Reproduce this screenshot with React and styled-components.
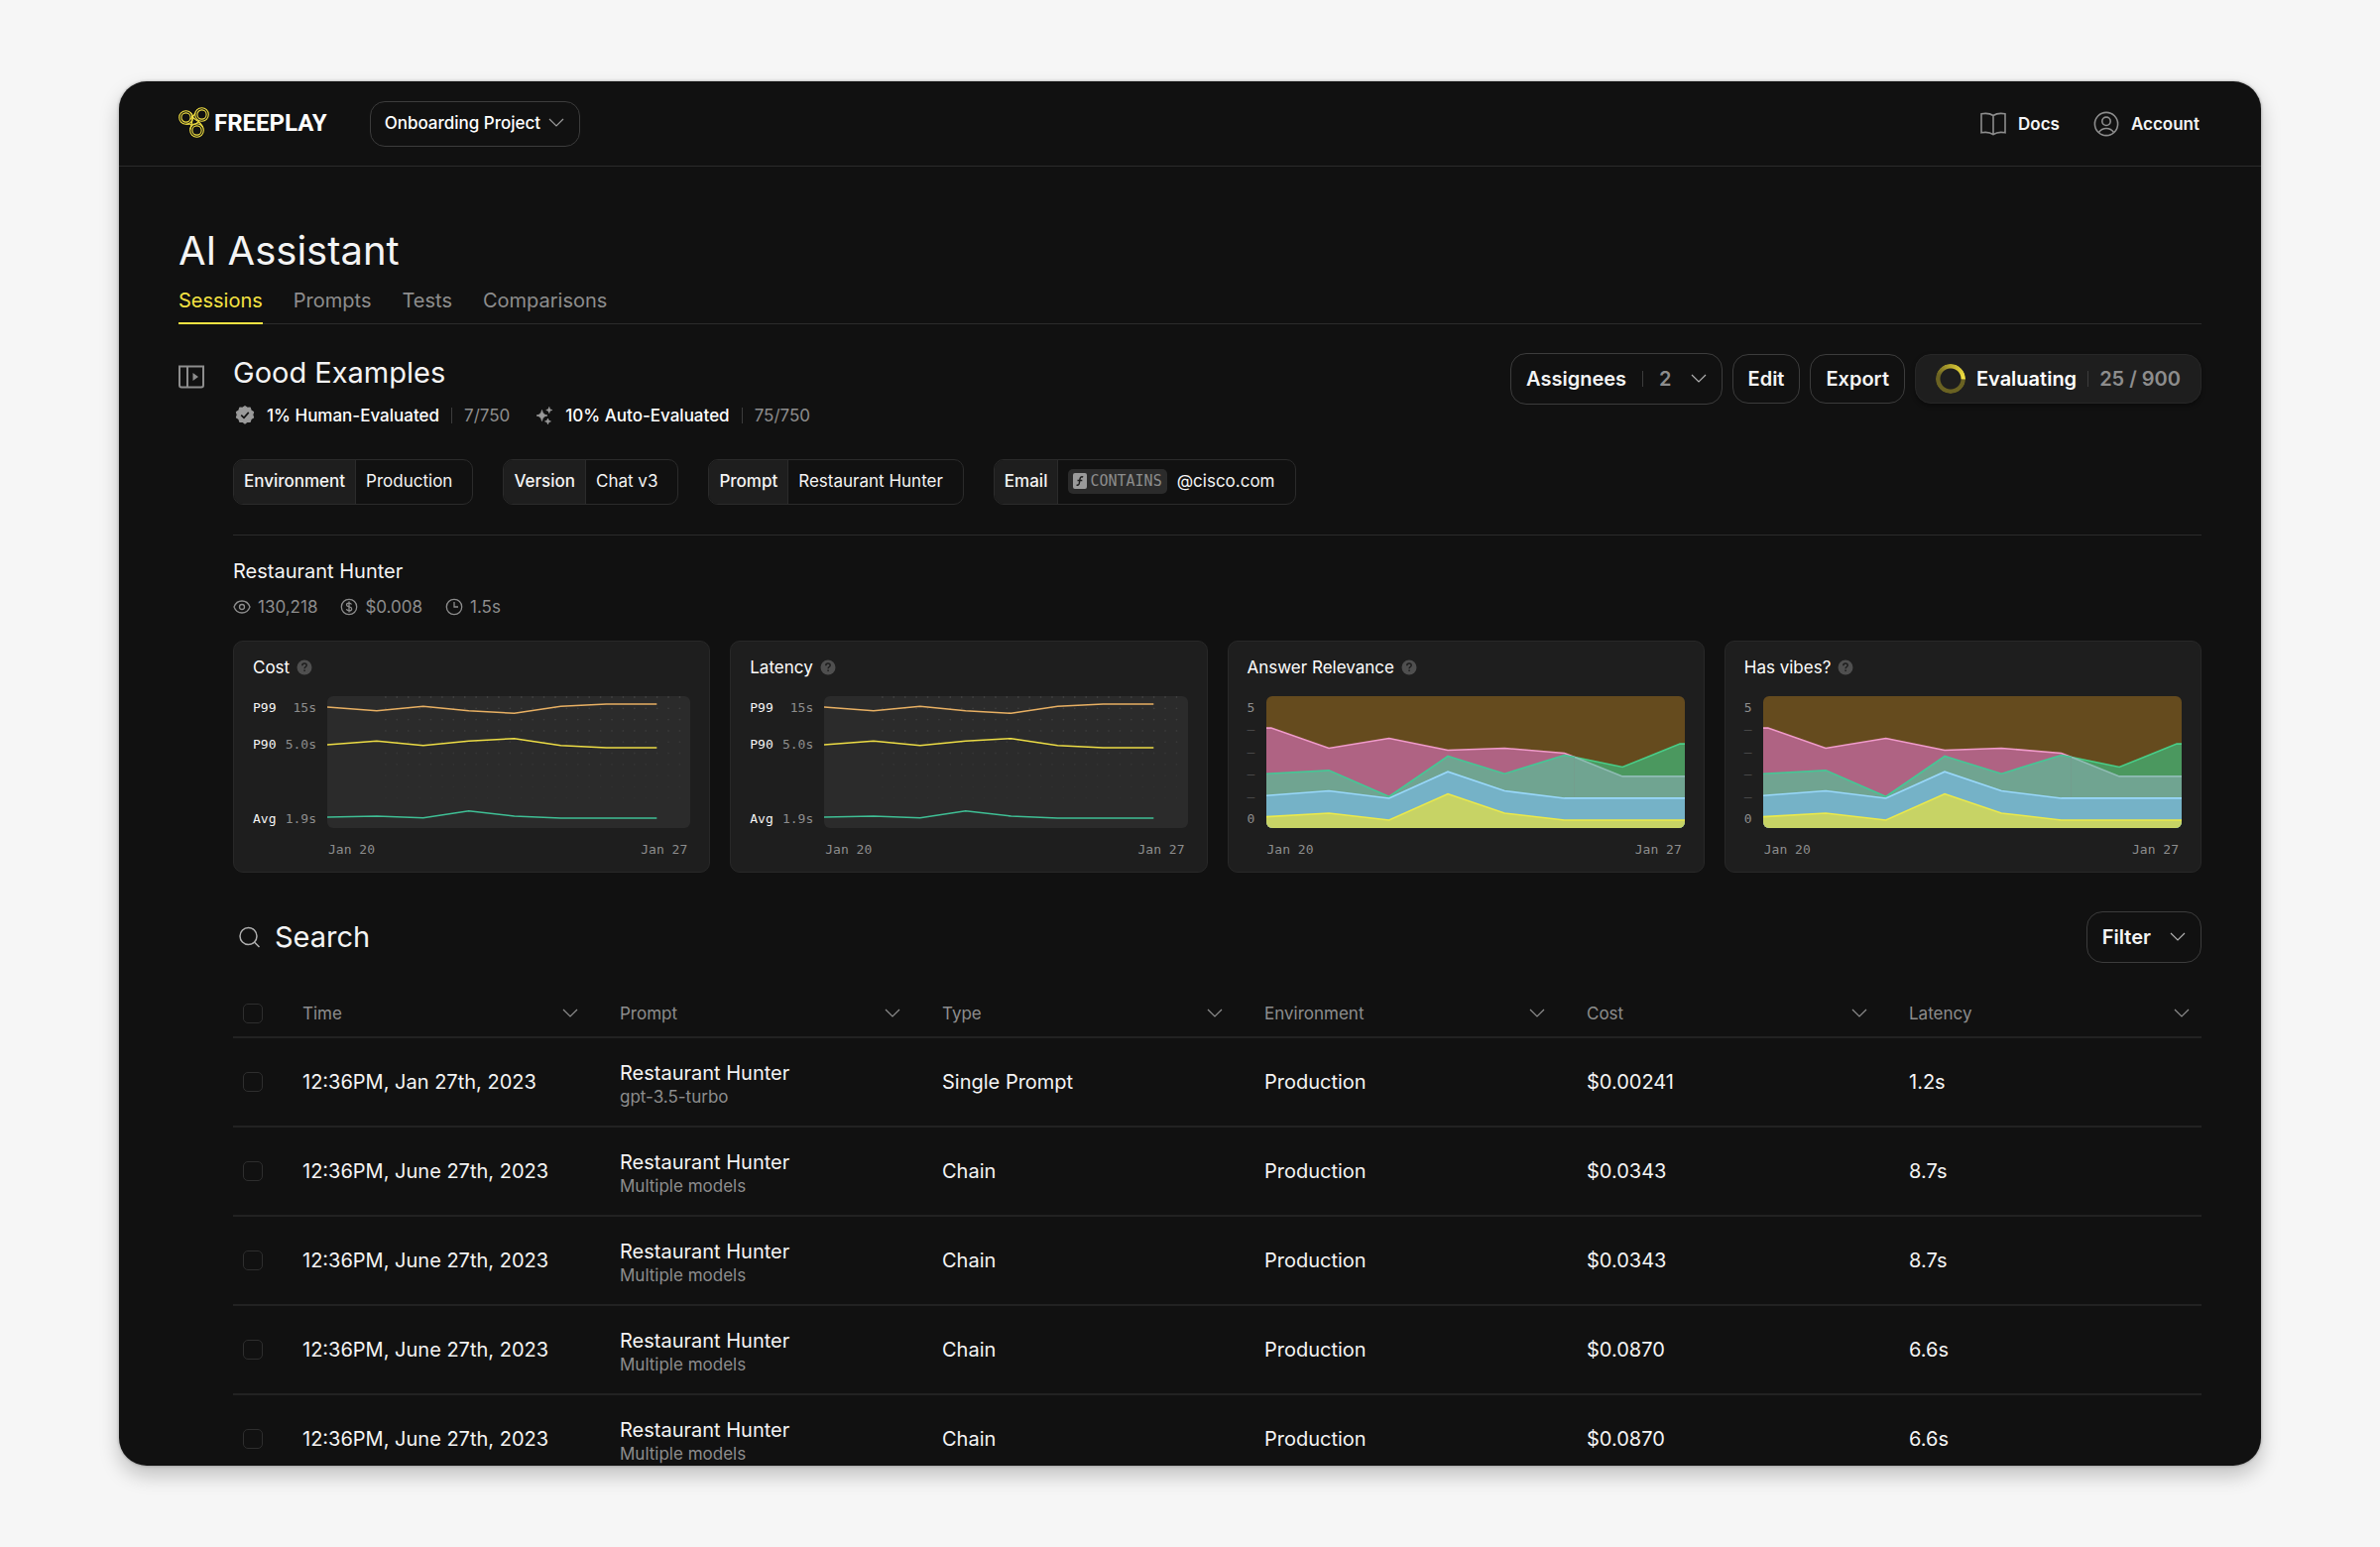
import React from 'react';
import styled, { createGlobalStyle } from 'styled-components';

const GlobalStyle = createGlobalStyle`
  *, *::before, *::after {
    box-sizing: border-box;
  }
  body {
    margin: 0;
    background-color: #f6f6f6;
    color: #f4f4f4;
    font-family: Inter, 'Liberation Sans', sans-serif;
    font-size: 17px;
    line-height: 24px;
  }
  button, input, select {
    font: inherit;
    color: inherit;
  }
  h1, h2, h3, p, ul, dl, dd {
    margin: 0;
    padding: 0;
    font-weight: 400;
  }
  svg {
    display: block;
    flex-shrink: 0;
  }
`;

const mono = "'DejaVu Sans Mono', 'Liberation Mono', monospace";

/* Shell */

const Page = styled.div`
  display: flex;
  height: 100vh;
  padding: 82px 5%;
`;

const AppWindow = styled.div`
  flex: 1;
  min-width: 0;
  overflow: hidden;
  background-color: #111111;
  border-radius: 28px;
  box-shadow: 0 0 3px rgba(0, 0, 0, 0.35), 0 10px 20px rgba(0, 0, 0, 0.22);
`;

const Header = styled.header`
  display: flex;
  align-items: center;
  height: 86px;
  padding: 0 62px 0 60px;
  border-bottom: 1px solid #2b2b2b;
`;

const Logo = styled.a`
  display: flex;
  align-items: center;
  gap: 5px;
  margin-right: 43px;
  padding-bottom: 2px;
  color: #ffffff;
  font-family: Roboto, sans-serif;
  font-size: 24px;
  font-weight: 700;
  text-decoration: none;
`;

const ProjectPicker = styled.label`
  display: flex;
  align-items: center;
  gap: 7px;
  height: 46px;
  padding: 0 15px 2px 14px;
  border: 1px solid #3c3c3c;
  border-radius: 15px;
  color: #9a9a9a;
  select {
    appearance: none;
    padding: 0;
    border: 0;
    background: none;
    color: #ffffff;
    font-weight: 500;
  }
`;

const HeaderNav = styled.nav`
  display: flex;
  gap: 34px;
  margin-left: auto;
`;

const HeaderLink = styled.a`
  display: flex;
  align-items: center;
  gap: 12px;
  color: #f4f4f4;
  font-weight: 600;
  text-decoration: none;
  svg {
    color: #8d8d8d;
  }
`;

const Main = styled.main`
  padding: 60px 60px 0;
`;

const PageTitle = styled.h1`
  font-size: 40px;
  line-height: 50px;
`;

const Tabs = styled.nav`
  display: flex;
  gap: 31px;
  height: 49px;
  border-bottom: 1px solid #2b2b2b;
`;

const Tab = styled.a`
  height: 49px;
  padding-top: 13px;
  font-size: 20px;
  color: ${props => (props.$active ? '#f5e342' : '#8d8d8d')};
  border-bottom: 2px solid ${props => (props.$active ? '#f5e342' : 'transparent')};
  text-decoration: none;
`;

const Body = styled.div`
  display: flex;
  align-items: flex-start;
  gap: 29px;
  padding-top: 29px;
`;

const PanelToggle = styled.button`
  margin-top: 12px;
  padding: 0;
  border: 0;
  background: none;
  color: #8d8d8d;
`;

const Content = styled.div`
  flex: 1;
  min-width: 0;
`;

/* Dataset heading */

const ContentHeader = styled.div`
  display: flex;
  justify-content: space-between;
  align-items: flex-start;
`;

const SectionTitle = styled.h2`
  font-size: 29px;
  line-height: 40px;
`;

const Progress = styled.ul`
  display: flex;
  gap: 26px;
  margin-top: 11px;
  padding-left: 2px;
  list-style: none;
`;

const ProgressItem = styled.li`
  display: flex;
  align-items: center;
  gap: 12px;
  color: #8d8d8d;
  strong {
    color: #ffffff;
    font-weight: 500;
  }
`;

const Separator = styled.span`
  width: 1px;
  height: 16px;
  background-color: #3c3c3c;
`;

const Actions = styled.div`
  display: flex;
  align-items: center;
  gap: 10px;
`;

const Button = styled.button`
  display: flex;
  align-items: center;
  gap: 16px;
  height: ${props => (props.$menu ? '52px' : '50px')};
  padding: 0 15px;
  border: 1px solid #3c3c3c;
  border-radius: 16px;
  background: none;
  font-size: 20px;
  font-weight: 600;
  color: #f4f4f4;
  svg {
    color: #b0b0b0;
    margin-left: 3px;
  }
`;

const Count = styled.span`
  color: #8d8d8d;
`;

const Evaluating = styled.div`
  display: flex;
  align-items: center;
  gap: 11px;
  height: 50px;
  padding: 0 20px;
  border: 1px solid #272727;
  border-radius: 16px;
  background-color: #1e1e1e;
  font-size: 20px;
  font-weight: 600;
  color: #ffffff;
  box-shadow: 0 2px 4px rgba(0, 0, 0, 0.4);
`;

const Ring = styled.span`
  width: 30px;
  height: 30px;
  border-radius: 50%;
  background: conic-gradient(#b8a92e, #f5e342 25%, #6a6222 26%, #6a6222 80%, #b8a92e);
  mask: radial-gradient(circle, transparent 10px, #000000 11px);
`;

/* Filters */

const Filters = styled.dl`
  display: flex;
  gap: 30px;
  padding: 32px 0 30px;
  border-bottom: 1px solid #2b2b2b;
`;

const FilterChip = styled.div`
  display: flex;
  height: 46px;
  border: 1px solid #2b2b2b;
  border-radius: 10px;
  overflow: hidden;
  dt, dd {
    display: flex;
    align-items: center;
    padding: 0 10px 2px;
  }
  dt {
    background-color: #1e1e1e;
    border-right: 1px solid #2b2b2b;
    font-weight: 500;
  }
  dd {
    gap: 10px;
    padding-right: 20px;
  }
`;

const Operator = styled.span`
  display: flex;
  align-items: center;
  gap: 3px;
  height: 25px;
  padding: 0 5px;
  border-radius: 5px;
  background-color: #2b2b2b;
  color: #8d8d8d;
  font-family: ${mono};
  font-size: 15px;
`;

/* Prompt summary and charts */

const Summary = styled.section`
  padding: 23px 0 39px;
`;

const SummaryTitle = styled.h3`
  font-size: 20px;
  line-height: 26px;
`;

const Metrics = styled.ul`
  display: flex;
  gap: 23px;
  margin: 11px 0 22px;
  list-style: none;
  color: #8d8d8d;
`;

const Metric = styled.li`
  display: flex;
  align-items: center;
  gap: 7px;
`;

const Cards = styled.div`
  display: grid;
  grid-template-columns: repeat(4, minmax(0, 1fr));
  gap: 20px;
`;

const Card = styled.article`
  padding: 14px 19px 13px;
  border: 1px solid #282828;
  border-radius: 10px;
  background-color: #1e1e1e;
`;

const CardTitle = styled.h3`
  display: flex;
  align-items: center;
  gap: 7px;
  margin-bottom: 17px;
  font-size: 17px;
  color: #ffffff;
`;

const ChartGrid = styled.div`
  display: grid;
  grid-template-columns: ${props => props.$axis} minmax(0, 1fr);
  row-gap: 13px;
  font-family: ${mono};
  font-size: 13px;
  line-height: 18px;
  color: #8d8d8d;
`;

const Axis = styled.div`
  display: flex;
  flex-direction: column;
  justify-content: space-between;
  padding: 3px 11px 0 0;
`;

const AxisRow = styled.div`
  display: flex;
  justify-content: space-between;
  min-height: 18px;
  color: ${props => (props.$dim ? '#4a4a4a' : '#8d8d8d')};
  b {
    color: #f4f4f4;
    font-weight: 400;
  }
`;

const ChartSvg = styled.svg`
  width: 100%;
  height: 133px;
  border-radius: 6px;
  background-color: ${props => props.$background};
  polyline {
    fill: none;
    stroke-width: 1.6px;
    vector-effect: non-scaling-stroke;
  }
`;

const Dates = styled.div`
  display: flex;
  grid-column: 2;
  justify-content: space-between;
  padding: 0 3px 0 1px;
`;

/* Search and table */

const SearchBar = styled.div`
  display: flex;
  align-items: center;
  justify-content: space-between;
`;

const SearchField = styled.label`
  display: flex;
  flex: 1;
  align-items: center;
  gap: 15px;
  padding-left: 6px;
  color: #b0b0b0;
  input {
    flex: 1;
    padding: 0;
    border: 0;
    background: none;
    color: #f4f4f4;
    font-size: 29px;
    line-height: 40px;
  }
  input::placeholder {
    color: #f4f4f4;
    opacity: 1;
  }
`;

const Table = styled.table`
  width: 100%;
  margin-top: 28px;
  border-collapse: collapse;
  table-layout: fixed;
  th, td {
    padding: 0;
    text-align: left;
    border-bottom: 2px solid #222222;
  }
  th {
    height: 47px;
    padding-right: 42px;
    color: #8d8d8d;
    font-weight: 400;
  }
  th:first-child {
    padding-right: 0;
  }
  th:last-child {
    padding-right: 12px;
  }
  td {
    height: 90px;
    font-size: 20px;
  }
`;

const SortButton = styled.button`
  display: flex;
  align-items: center;
  justify-content: space-between;
  width: 100%;
  padding: 0;
  border: 0;
  background: none;
`;

const Checkbox = styled.input.attrs({ type: 'checkbox' })`
  display: block;
  appearance: none;
  width: 20px;
  height: 20px;
  margin: 0 0 0 10px;
  border: 1px solid #2e2e2e;
  border-radius: 5px;
`;

const PromptName = styled.p`
  padding-top: 5px;
`;

const Model = styled.p`
  color: #8d8d8d;
  font-size: 17px;
`;

/* Icons */

const LogoMark = () => (
  <svg width="31" height="31" viewBox="0 0 31 31" fill="none" stroke="#f5e342" strokeWidth="1.1">
    <circle cx="7.500" cy="10.500" r="6.800" />
    <circle cx="7.500" cy="10.500" r="4.600" />
    <circle cx="23.500" cy="7.500" r="6.800" />
    <circle cx="23.500" cy="7.500" r="4.600" />
    <circle cx="18.500" cy="23.500" r="6.800" />
    <circle cx="18.500" cy="23.500" r="4.600" />
    <path d="M7.500 17.300h8.500c2 0 3-1.200 4.500-3.600M12.300 5.800c2.500 2.500 2.200 4.500 1.800 7.200l-2.300 9.500M16.800 6c-1.500 3.500-3.300 4.200-5 6.500M13 9l4 3.500c3 1.500 6 4.500 7.800 8" />
  </svg>
);

const ChevronIcon = () => (
  <svg width="16" height="10" viewBox="0 0 16 10" fill="none" stroke="currentColor" strokeWidth="1.2">
    <path d="M1 1l7 7 7-7" />
  </svg>
);

const BookIcon = () => (
  <svg width="26" height="24" viewBox="0 0 26 24" fill="none" stroke="currentColor" strokeWidth="1.6">
    <path d="M13 3.500C10 1.500 5 1 1 1.800v19c4-.8 9-.3 12 1.900 3-2.200 8-2.700 12-1.900v-19C21 1 16 1.500 13 3.500zM13 3.500v19" />
  </svg>
);

const AccountIcon = () => (
  <svg width="26" height="26" viewBox="0 0 26 26" fill="none" stroke="currentColor" strokeWidth="1.6">
    <circle cx="13" cy="13" r="11.600" />
    <circle cx="13" cy="10.300" r="4.200" />
    <path d="M5.500 21.500c2-3 4.500-4 7.500-4s5.500 1 7.500 4" />
  </svg>
);

const PanelIcon = () => (
  <svg width="26" height="24" viewBox="0 0 26 24" fill="none" stroke="currentColor" strokeWidth="2">
    <path d="M1 1.500h24v19a2 2 0 0 1-2 2H3a2 2 0 0 1-2-2zM9 1.500v21" />
    <path d="M14.500 8v8l5.500-4z" fill="currentColor" stroke="none" />
  </svg>
);

const BadgeIcon = () => (
  <svg width="20" height="20" viewBox="0 0 24 24">
    <path
      fill="#9a9a9a"
      d="M12 .8l2.800 2 3.400-.2 1.100 3.300 2.900 1.900-1 3.300 1 3.300-2.900 1.900-1.100 3.300-3.400-.1-2.800 2.100-2.800-2.100-3.400.1-1.100-3.300-2.900-1.900 1-3.300-1-3.300 2.900-1.900 1.100-3.300 3.400.2z"
      stroke="#9a9a9a"
      strokeWidth="1.500"
      strokeLinejoin="round"
    />
    <path d="M7.500 11.500l3.300 3.300 5.700-6.600" fill="none" stroke="#111111" strokeWidth="2" />
  </svg>
);

const SparklesIcon = () => (
  <svg width="18" height="18" viewBox="0 0 18 18" fill="#9a9a9a" stroke="#9a9a9a" strokeWidth="0.8" strokeLinejoin="round">
    <path d="M6.500 3.500c.8 3.500 2 4.700 5.500 5.500-3.500.8-4.700 2-5.500 5.500C5.700 11 4.500 9.800 1 9c3.500-.8 4.700-2 5.500-5.500z" />
    <path d="M13.800.5c.4 2 1 2.600 3 3-2 .4-2.600 1-3 3-.4-2-1-2.600-3-3 2-.4 2.600-1 3-3zM12.500 12c.4 1.900 1 2.500 2.900 2.900-1.900.4-2.500 1-2.900 2.900-.4-1.900-1-2.500-2.900-2.900 1.900-.4 2.500-1 2.900-2.900z" />
  </svg>
);

const FunctionIcon = () => (
  <svg width="14" height="16" viewBox="0 0 14 16">
    <rect width="14" height="16" rx="2" fill="#9a9a9a" />
    <path d="M10.200 4c-2-.8-2.900.2-3.200 2l-.6 4c-.3 1.900-1.200 2.600-2.800 2M4.500 7.500h4.800" fill="none" stroke="#1e1e1e" strokeWidth="1.500" />
  </svg>
);

const EyeIcon = () => (
  <svg width="18" height="16" viewBox="0 0 18 16" fill="none" stroke="currentColor" strokeWidth="1.300">
    <path d="M1 8c1.500-4 4.500-6 8-6s6.500 2 8 6c-1.500 4-4.500 6-8 6s-6.500-2-8-6z" />
    <circle cx="9" cy="8" r="2.500" />
  </svg>
);

const DollarIcon = () => (
  <svg width="18" height="18" viewBox="0 0 18 18" fill="none" stroke="currentColor" strokeWidth="1.300">
    <circle cx="9" cy="9" r="7.700" />
    <path d="M11.500 6.500C11 5.600 10.200 5.200 9 5.200c-1.500 0-2.500.7-2.500 1.800 0 2.700 5.200 1.200 5.200 3.900 0 1.200-1.100 1.900-2.700 1.900-1.300 0-2.200-.5-2.700-1.500M9 3.500v11" />
  </svg>
);

const ClockIcon = () => (
  <svg width="18" height="18" viewBox="0 0 18 18" fill="none" stroke="currentColor" strokeWidth="1.300">
    <circle cx="9" cy="9" r="7.700" />
    <path d="M9 4v5h4" />
  </svg>
);

const HelpIcon = () => (
  <svg width="16" height="16" viewBox="0 0 16 16">
    <circle cx="8" cy="8" r="7.500" fill="#4f4f4f" />
    <path d="M5.800 6.200c0-1.300.9-2.100 2.200-2.100s2.200.8 2.200 1.900c0 1.500-2.100 1.500-2.100 3.200M8.100 10.500v1.600" fill="none" stroke="#1e1e1e" strokeWidth="1.500" />
  </svg>
);

const SearchIcon = () => (
  <svg width="21" height="22" viewBox="0 0 21 22" fill="none" stroke="currentColor" strokeWidth="1.500">
    <circle cx="9.500" cy="10" r="8.500" />
    <path d="M15.500 16l5 5" />
  </svg>
);

/* Charts */

const lineSeries = [
  { color: '#e8b063', points: '0,11 50,14.700 97,10.300 143,14.700 189,17.300 236,10.300 282,8 333,8' },
  { color: '#ecdc45', points: '0,49 50,45.300 97,49.700 143,45.300 189,42.700 236,49.700 282,52 333,52' },
  { color: '#3fbf95', points: '0,122 50,121 97,122.700 143,115.700 189,121 236,123 333,123' },
];

const LineChart = () => (
  <ChartSvg $background="#2b2b2b" viewBox="0 0 367 133" preserveAspectRatio="none">
    {Array.from({ length: 10 }, (_, row) =>
      Array.from({ length: 27 }, (_, column) => (
        <circle
          key={`${row}-${column}`}
          cx={59 + column * 11.43}
          cy={1 + row * 11.3}
          r="0.9"
          fill="#ffffff"
          opacity={0.1 - row * 0.009}
        />
      ))
    )}
    {lineSeries.map(line => (
      <polyline key={line.color} points={line.points} stroke={line.color} />
    ))}
  </ChartSvg>
);

const pinkStart = '0,96 14,96 183,157 359,127 531,163 697,157 872,172 902,184';
const pinkEnd = '902,184 1042,242 1225,242';
const greenStart = '0,234 183,224 359,303 531,181 697,234 872,178 902,184';
const greenEnd = '902,184 1042,214 1210,144 1225,144';
const blue = '0,300 183,286 359,308 531,228 697,286 872,308 1225,308';
const yellow = '0,364 183,353 359,374 531,295 697,353 872,374 1225,374';

const areaSeries = [
  { fill: '#af6383', stroke: '#f09bcb', points: pinkStart },
  { fill: '#4b985f', stroke: '#48ce88', points: greenEnd },
  { fill: '#70a491', stroke: '#8fbcb4', points: pinkEnd },
  { fill: '#70a491', stroke: '#45c795', points: greenStart },
  { fill: '#75b2c7', stroke: '#99d8fb', points: blue },
  { fill: '#c7d365', stroke: '#ebe94a', points: yellow },
];

const closeArea = points => {
  const pairs = points.split(' ');
  const left = pairs[0].split(',')[0];
  const right = pairs[pairs.length - 1].split(',')[0];
  return `${points} ${right},398 ${left},398`;
};

const AreaChart = () => (
  <ChartSvg $background="#654b1e" viewBox="0 0 1225 398" preserveAspectRatio="none">
    {areaSeries.map(area => (
      <React.Fragment key={area.stroke}>
        <polygon points={closeArea(area.points)} fill={area.fill} />
        <polyline points={area.points} stroke={area.stroke} />
      </React.Fragment>
    ))}
  </ChartSvg>
);

const latencyAxis = [['P99', '15s'], ['P90', '5.0s'], ['', ''], ['Avg', '1.9s']];
const scoreAxis = ['5', '–', '–', '–', '–', '0'];

const ChartCard = ({ title, type }) => (
  <Card>
    <CardTitle>
      {title}
      <HelpIcon />
    </CardTitle>
    <ChartGrid $axis={type === 'line' ? '75px' : '19px'}>
      <Axis>
        {type === 'line'
          ? latencyAxis.map(([name, value]) => (
            <AxisRow key={name}>
              <b>{name}</b>
              {value}
            </AxisRow>
          ))
          : scoreAxis.map((tick, index) => (
            <AxisRow key={index} $dim={tick === '–'}>{tick}</AxisRow>
          ))}
      </Axis>
      {type === 'line' ? <LineChart /> : <AreaChart />}
      <Dates>
        <span>Jan 20</span>
        <span>Jan 27</span>
      </Dates>
    </ChartGrid>
  </Card>
);

/* Data */

const tabs = ['Sessions', 'Prompts', 'Tests', 'Comparisons'];
const columns = ['Time', 'Prompt', 'Type', 'Environment', 'Cost', 'Latency'];
const columnWidths = ['70px', '320px', 'auto', 'auto', 'auto', 'auto', '295px'];

const sessions = [
  { time: '12:36PM, Jan 27th, 2023', model: 'gpt-3.5-turbo', type: 'Single Prompt', cost: '$0.00241', latency: '1.2s' },
  { time: '12:36PM, June 27th, 2023', model: 'Multiple models', type: 'Chain', cost: '$0.0343', latency: '8.7s' },
  { time: '12:36PM, June 27th, 2023', model: 'Multiple models', type: 'Chain', cost: '$0.0343', latency: '8.7s' },
  { time: '12:36PM, June 27th, 2023', model: 'Multiple models', type: 'Chain', cost: '$0.0870', latency: '6.6s' },
  { time: '12:36PM, June 27th, 2023', model: 'Multiple models', type: 'Chain', cost: '$0.0870', latency: '6.6s' },
];

const AppHeader = () => (
  <Header>
    <Logo href="#">
      <LogoMark />
      FREEPLAY
    </Logo>
    <ProjectPicker>
      <select aria-label="Project">
        <option>Onboarding Project</option>
      </select>
      <ChevronIcon />
    </ProjectPicker>
    <HeaderNav>
      <HeaderLink href="#docs">
        <BookIcon />
        Docs
      </HeaderLink>
      <HeaderLink href="#account">
        <AccountIcon />
        Account
      </HeaderLink>
    </HeaderNav>
  </Header>
);

const DatasetHeader = () => (
  <ContentHeader>
    <div>
      <SectionTitle>Good Examples</SectionTitle>
      <Progress>
        <ProgressItem>
          <BadgeIcon />
          <strong>1% Human-Evaluated</strong>
          <Separator />
          7/750
        </ProgressItem>
        <ProgressItem>
          <SparklesIcon />
          <strong>10% Auto-Evaluated</strong>
          <Separator />
          75/750
        </ProgressItem>
      </Progress>
    </div>
    <Actions>
      <Button $menu aria-haspopup="menu">
        Assignees
        <Separator />
        <Count>2</Count>
        <ChevronIcon />
      </Button>
      <Button>Edit</Button>
      <Button>Export</Button>
      <Evaluating>
        <Ring />
        Evaluating
        <Separator />
        <Count>25 / 900</Count>
      </Evaluating>
    </Actions>
  </ContentHeader>
);

const ActiveFilters = () => (
  <Filters>
    <FilterChip>
      <dt>Environment</dt>
      <dd>Production</dd>
    </FilterChip>
    <FilterChip>
      <dt>Version</dt>
      <dd>Chat v3</dd>
    </FilterChip>
    <FilterChip>
      <dt>Prompt</dt>
      <dd>Restaurant Hunter</dd>
    </FilterChip>
    <FilterChip>
      <dt>Email</dt>
      <dd>
        <Operator>
          <FunctionIcon />
          CONTAINS
        </Operator>
        @cisco.com
      </dd>
    </FilterChip>
  </Filters>
);

const SessionsTable = () => (
  <Table>
    <colgroup>
      {columnWidths.map((width, index) => (
        <col key={index} width={width === 'auto' ? undefined : width} />
      ))}
    </colgroup>
    <thead>
      <tr>
        <th>
          <Checkbox aria-label="Select all sessions" />
        </th>
        {columns.map(column => (
          <th key={column}>
            <SortButton>
              {column}
              <ChevronIcon />
            </SortButton>
          </th>
        ))}
      </tr>
    </thead>
    <tbody>
      {sessions.map((session, index) => (
        <tr key={index}>
          <td>
            <Checkbox aria-label={`Select session ${index + 1}`} />
          </td>
          <td>{session.time}</td>
          <td>
            <PromptName>Restaurant Hunter</PromptName>
            <Model>{session.model}</Model>
          </td>
          <td>{session.type}</td>
          <td>Production</td>
          <td>{session.cost}</td>
          <td>{session.latency}</td>
        </tr>
      ))}
    </tbody>
  </Table>
);

const App = () => (
  <Page>
    <GlobalStyle />
    <AppWindow>
      <AppHeader />
      <Main>
        <PageTitle>AI Assistant</PageTitle>
        <Tabs>
          {tabs.map((tab, index) => (
            <Tab key={tab} href={`#${tab.toLowerCase()}`} $active={index === 0}>{tab}</Tab>
          ))}
        </Tabs>
        <Body>
          <PanelToggle aria-label="Toggle side panel">
            <PanelIcon />
          </PanelToggle>
          <Content>
            <DatasetHeader />
            <ActiveFilters />
            <Summary>
              <SummaryTitle>Restaurant Hunter</SummaryTitle>
              <Metrics>
                <Metric><EyeIcon />130,218</Metric>
                <Metric><DollarIcon />$0.008</Metric>
                <Metric><ClockIcon />1.5s</Metric>
              </Metrics>
              <Cards>
                <ChartCard title="Cost" type="line" />
                <ChartCard title="Latency" type="line" />
                <ChartCard title="Answer Relevance" type="area" />
                <ChartCard title="Has vibes?" type="area" />
              </Cards>
            </Summary>
            <SearchBar>
              <SearchField>
                <SearchIcon />
                <input type="text" placeholder="Search" aria-label="Search sessions" />
              </SearchField>
              <Button $menu aria-haspopup="menu">
                Filter
                <ChevronIcon />
              </Button>
            </SearchBar>
            <SessionsTable />
          </Content>
        </Body>
      </Main>
    </AppWindow>
  </Page>
);

export default App;
